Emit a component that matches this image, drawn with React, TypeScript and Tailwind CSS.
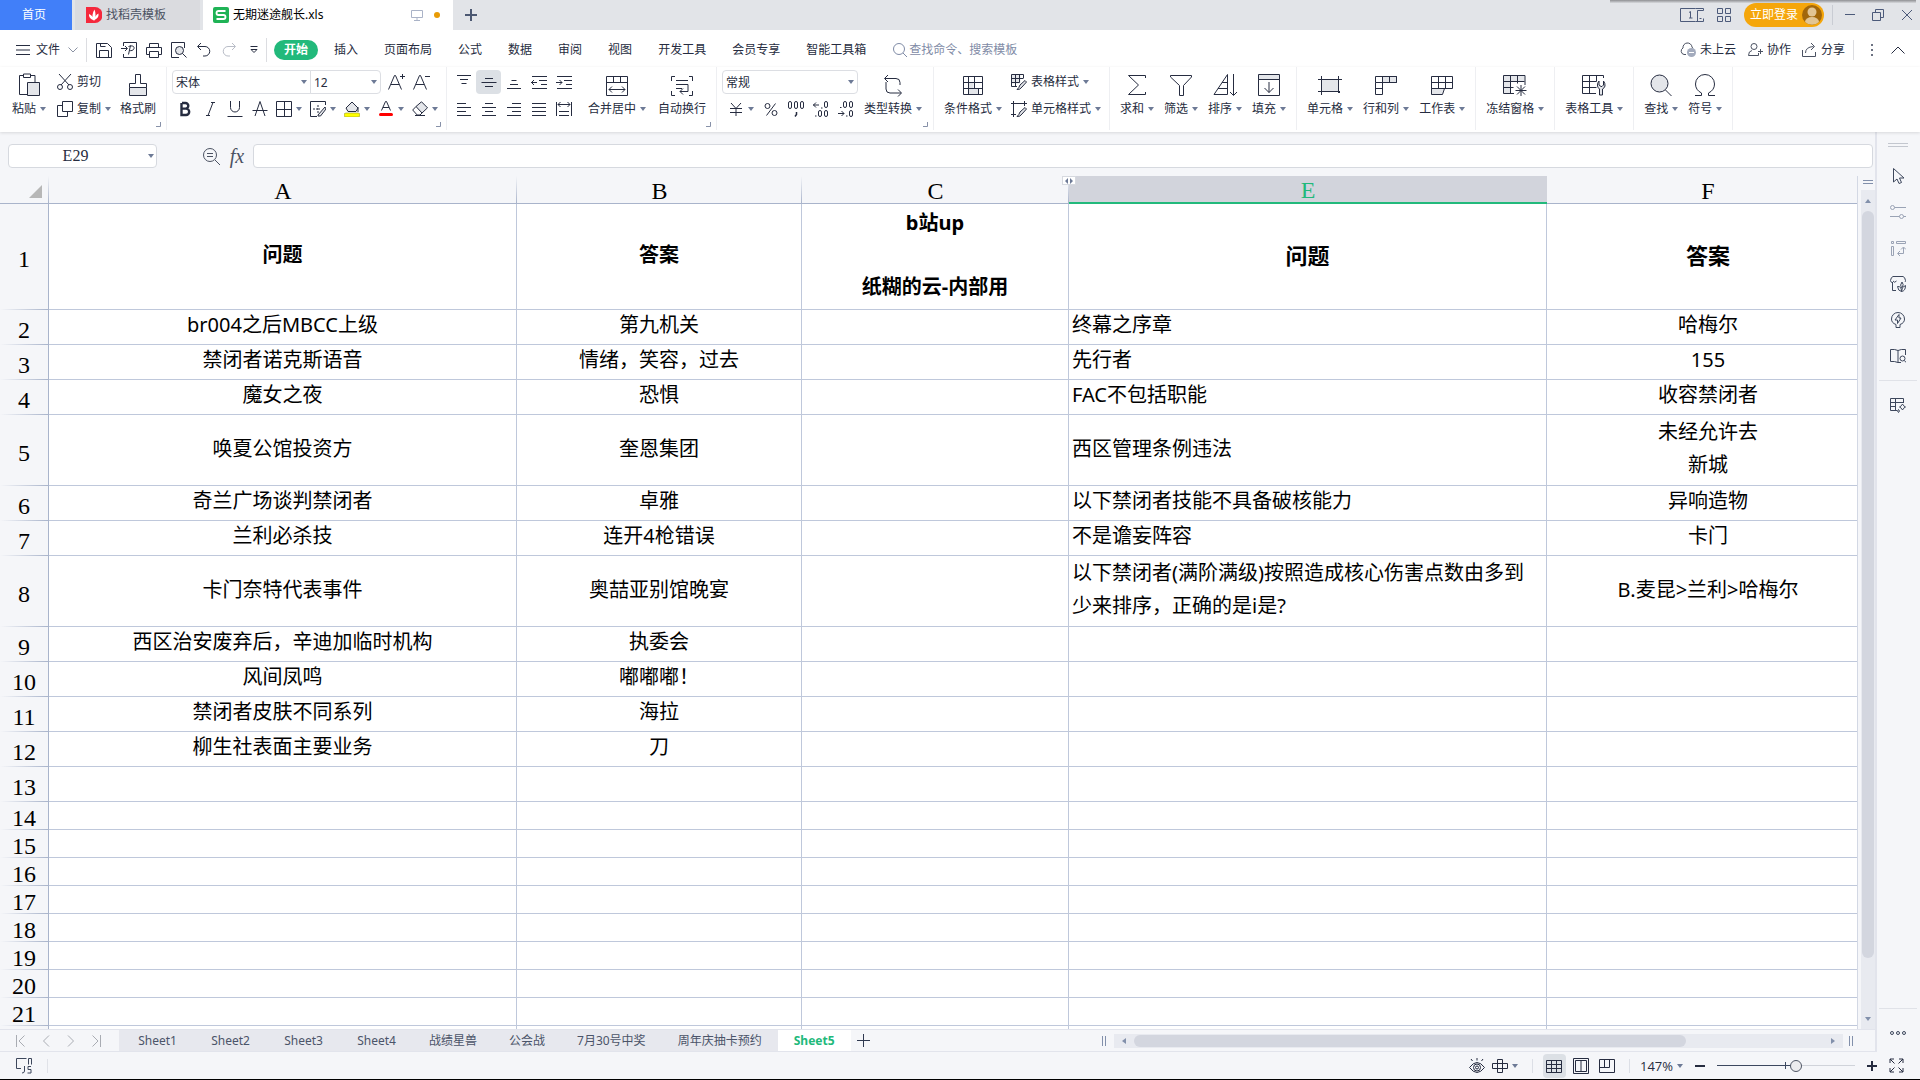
import React, { useState } from 'react';

type Cell = { text: string; left?: boolean; big?: boolean };

interface Row {
  height: string;
  bold?: boolean;
  cells: (Cell | null)[];
}

const c = (text: string): Cell => ({ text });
const l = (text: string): Cell => ({ text, left: true });

const H_TALL = 'h-[71px] leading-[33px]';
const H_ROW = 'h-[35px] leading-[30px]';
const H_EMPTY = 'h-[28px] leading-[24px]';

const ROWS: Row[] = [
  {
    height: 'h-[106px] leading-[32px]',
    bold: true,
    cells: [c('问题'), c('答案'), c('b站up\n\n纸糊的云-内部用'), { text: '问题', big: true }, { text: '答案', big: true }],
  },
  { height: H_ROW, cells: [c('br004之后MBCC上级'), c('第九机关'), null, l('终幕之序章'), c('哈梅尔')] },
  { height: H_ROW, cells: [c('禁闭者诺克斯语音'), c('情绪，笑容，过去'), null, l('先行者'), c('155')] },
  { height: H_ROW, cells: [c('魔女之夜'), c('恐惧'), null, l('FAC不包括职能'), c('收容禁闭者')] },
  { height: H_TALL, cells: [c('唤夏公馆投资方'), c('奎恩集团'), null, l('西区管理条例违法'), c('未经允许去\n新城')] },
  { height: H_ROW, cells: [c('奇兰广场谈判禁闭者'), c('卓雅'), null, l('以下禁闭者技能不具备破核能力'), c('异响造物')] },
  { height: H_ROW, cells: [c('兰利必杀技'), c('连开4枪错误'), null, l('不是谵妄阵容'), c('卡门')] },
  {
    height: H_TALL,
    cells: [
      c('卡门奈特代表事件'),
      c('奥喆亚别馆晚宴'),
      null,
      l('以下禁闭者(满阶满级)按照造成核心伤害点数由多到少来排序，正确的是i是?'),
      c('B.麦昆>兰利>哈梅尔'),
    ],
  },
  { height: H_ROW, cells: [c('西区治安废弃后，辛迪加临时机构'), c('执委会'), null, null, null] },
  { height: H_ROW, cells: [c('风间凤鸣'), c('嘟嘟嘟！'), null, null, null] },
  { height: H_ROW, cells: [c('禁闭者皮肤不同系列'), c('海拉'), null, null, null] },
  { height: H_ROW, cells: [c('柳生社表面主要业务'), c('刀'), null, null, null] },
  { height: H_ROW, cells: [null, null, null, null, null] },
  ...Array.from({ length: 8 }, () => ({ height: H_EMPTY, cells: [null, null, null, null, null] })),
];

const COLUMNS = ['A', 'B', 'C', 'E', 'F'];
const MENUS = ['插入', '页面布局', '公式', '数据', '审阅', '视图', '开发工具', '会员专享', '智能工具箱'];
const SHEETS = ['Sheet1', 'Sheet2', 'Sheet3', 'Sheet4', '战绩星兽', '公会战', '7月30号中奖', '周年庆抽卡预约', 'Sheet5'];

const Svg: React.FC<{ w?: number; h?: number; className?: string; children: React.ReactNode }> = ({
  w = 16,
  h = 16,
  className = '',
  children,
}) => (
  <svg width={w} height={h} viewBox={`0 0 ${w} ${h}`} fill="none" stroke="currentColor" className={`shrink-0 ${className}`} aria-hidden="true">
    {children}
  </svg>
);

const Caret = () => (
  <svg width="6" height="4" viewBox="0 0 6 4" className="shrink-0 text-[#6d7a96]" aria-hidden="true">
    <path d="M0 0h6L3 4z" fill="currentColor" />
  </svg>
);

const Corner = () => (
  <Svg w={5} h={5} className="absolute right-[5px] bottom-[3px] text-[#8791a8]">
    <path d="M4.500 0v4.500H0" />
  </Svg>
);

const Sep = () => <div className="h-6 w-px shrink-0 bg-[#dcdde1]" />;

/* ---------- icons ---------- */

const GREY = '#e4e6ea';

const I = {
  save: <Svg><path d="M.5 15.500V1.500h11l4 4v10zM3.500 15.500v-7h9v7M4.500 1.500v3h5" /></Svg>,
  exportPdf: <Svg><path d="M2.500 4V.5h13v15h-13V12M0 6.500h6M4 4l2.500 2.500L4 9M7.500 12.500l2-9M7.500 4.500c4-1.500 6 0 5.500 2s-3 2.500-4.500 2" /></Svg>,
  print: <Svg><path d="M3.500 5V1.500h9V5M3.500 12.500h-3v-7h15v7h-3M3.500 9.500h9v6h-9z" /></Svg>,
  preview: (
    <Svg>
      <path d="M13.500 6V.5H.5v15H8" />
      <circle cx="8.500" cy="8.500" r="4" fill={GREY} />
      <path d="M11.500 11.500l4 4" />
    </Svg>
  ),
  undo: <Svg><path d="M5 1L1.500 4.500 5 8M2 4.500h7a4.500 4.500 0 010 9.500H7" /></Svg>,
  redo: <Svg className="text-[#b9bdc7]"><path d="M11 1l3.500 3.500L11 8M14 4.500H7A4.500 4.500 0 007 14h2" /></Svg>,
  more: <Svg w={8} h={8}><path d="M.5.5h7M1 3.500h6l-3 3z" /></Svg>,
  paste: (
    <Svg w={22} h={24}>
      <path d="M6 2.500H1.500v19H9M12 2.500h5V9" />
      <path d="M5.500 1h7v3.500h-7z" />
      <path d="M9.500 9.500h12v13h-12z" fill={GREY} />
    </Svg>
  ),
  cut: (
    <Svg>
      <path d="M2 0l10 11M14 0L4 11" />
      <circle cx="3" cy="13" r="2.500" />
      <circle cx="13" cy="13" r="2.500" />
    </Svg>
  ),
  copy: <Svg><path d="M5.500.5h10v10h-10zM5.500 4.500h-5v11h10v-5" /></Svg>,
  painter: (
    <Svg w={20} h={24}>
      <path d="M1.500 14.500h17v8h-17z" fill={GREY} />
      <path d="M1.500 14.500v-4h6v-9h5v9h6v4" />
    </Svg>
  ),
  fontUp: <Svg w={17}><path d="M.5 15.500L6.500 1.500h1l6 14M3 10.500h8M14.500 0v5M12 2.500h5" /></Svg>,
  fontDown: <Svg w={17}><path d="M.5 15.500L6.500 1.500h1l6 14M3 10.500h8M12 2.500h5" /></Svg>,
  bold: <Svg><path d="M4.500 2v12H9a3.200 3.200 0 000-6.400H5M5 2h3.500a2.800 2.800 0 010 5.600" strokeWidth="2.400" /></Svg>,
  italic: <Svg><path d="M9 1.500h4M4 14.500h4M11 1.500l-5 13" /></Svg>,
  underline: <Svg><path d="M3.500 0v6.500a4.500 4.500 0 009 0V0M.5 15.500h15" /></Svg>,
  strike: <Svg><path d="M3 15L8 .5 13 15M.5 9.500h15" /></Svg>,
  borders: <Svg><path d="M.5.5h15v15H.5zM8.500.5v15M.5 8.500h15" /></Svg>,
  borderPen: (
    <Svg>
      <path d="M15.500 4V.5H.5v15H7" />
      <path d="M8 4v8M3 8h7" strokeDasharray="2 1" />
      <path d="M8 14l7-8 1 2-5.500 7H8z" fill={GREY} />
    </Svg>
  ),
  fill: (
    <Svg>
      <path d="M2 7l6-6 6 6-2 3.500H4z" fill={GREY} />
      <path d="M2 7l6-6 6 6M14 6v5" />
      <rect x="0" y="12" width="16" height="4" rx="2" fill="#ffff00" stroke="#8d9136" strokeWidth=".6" />
    </Svg>
  ),
  fontColor: (
    <Svg>
      <path d="M3.500 9.500L7.500.5h1l4 9M5 6.500h6" />
      <rect x="1" y="12" width="14" height="3" rx="1.500" fill="#ff0000" stroke="none" />
    </Svg>
  ),
  eraser: (
    <Svg>
      <path d="M4 5.500L9.500.8l6 6L10 12z" fill={GREY} />
      <path d="M4 5.500L.7 9l4.500 5H8l2-2M3 14.500h10" />
    </Svg>
  ),
  alignTop: <Svg><path d="M1 1.500h14M4 5.500h8M5.500 9.500h5" /></Svg>,
  alignMiddle: <Svg><path d="M4 4.500h8M.5 8.500h15M4 12.500h8" /></Svg>,
  alignBottom: <Svg><path d="M5.500 6.500h5M4 10.500h8M1 14.500h14" /></Svg>,
  outdent: <Svg><path d="M1 2.500h15M8 6.500h8M10 10.500h6M1 14.500h15M0 8.500h6M3 6L.5 8.500 3 11" /></Svg>,
  indent: <Svg><path d="M1 2.500h15M8 6.500h8M10 10.500h6M1 14.500h15M0 8.500h6M3.500 6L6 8.500 3.500 11" /></Svg>,
  left: <Svg><path d="M1 2.500h9M1 6.500h14M1 10.500h9M1 14.500h14" /></Svg>,
  center: <Svg><path d="M4 2.500h8M1 6.500h14M4 10.500h8M1 14.500h14" /></Svg>,
  right: <Svg><path d="M6 2.500h9M1 6.500h14M6 10.500h9M1 14.500h14" /></Svg>,
  justify: <Svg><path d="M1 2.500h14M1 6.500h14M1 10.500h14M1 14.500h14" /></Svg>,
  distribute: <Svg><path d="M.5 1v14M15.500 1v14M2 3.500h12M4.500 1L2 3.500 4.500 6M11.500 1L14 3.500 11.500 6M3 10.500h10M3 14.500h10" /></Svg>,
  merge: <Svg w={22} h={24}><path d="M.5 3.500h21v19H.5zM.5 9.500h21M7.500 3.500v6M14.500 3.500v6M3 16.500h16M6 13.500l-3 3 3 3M16 13.500l3 3-3 3" /></Svg>,
  wrap: <Svg w={22} h={24}><path d="M4 3.500H.5V8M18 3.500h3.500V8M4 22.500H.5V18M18 22.500h3.500V18M5 7.500h12M5 11.500h12v7H9M5 15.500h6M12 15.500l-3 3 3 3" /></Svg>,
  yen: <Svg><path d="M3 2l5 5.500L13 2M8 7.500V15M2 7.500h12M2 11.500h12" /></Svg>,
  percent: (
    <Svg>
      <circle cx="4.500" cy="5" r="2.500" />
      <circle cx="11.500" cy="12" r="2.500" />
      <path d="M12.500 2.500l-9 12" />
    </Svg>
  ),
  thousands: (
    <Svg>
      <rect x=".5" y=".5" width="3" height="7" rx="1.500" />
      <rect x="6.500" y=".5" width="3" height="7" rx="1.500" />
      <rect x="12.500" y=".5" width="3" height="7" rx="1.500" />
      <path d="M8.500 11v2.500L7 15.500" strokeWidth="1.500" />
    </Svg>
  ),
  moreDecimal: (
    <Svg>
      <path d="M0 4h6M3 1.500L.5 4 3 6.500M8 7h1.500M2 15h1.500" />
      <rect x="11.500" y=".5" width="3" height="6" rx="1.500" />
      <rect x="5.500" y="9.500" width="3" height="6" rx="1.500" />
      <rect x="11.500" y="9.500" width="3" height="6" rx="1.500" />
    </Svg>
  ),
  lessDecimal: (
    <Svg>
      <path d="M0 12.500h6M3.500 10L6 12.500 3.500 15M8 15h1.500M2 6.500h1.500" />
      <rect x="5.500" y=".5" width="3" height="6" rx="1.500" />
      <rect x="11.500" y=".5" width="3" height="6" rx="1.500" />
      <rect x="11.500" y="9.500" width="3" height="6" rx="1.500" />
    </Svg>
  ),
  convert: <Svg w={20} h={24}><path d="M5 2L1.500 5.500 5 9M2 5.500h11q4 0 4 4V12M3 9v7q0 4 4 4h11M15 16.500l3.500 3.500-3.500 3.500" /></Svg>,
  condFormat: (
    <Svg w={22} h={24}>
      <path d="M6.500 9.500h5v6h-5zM6.500 15.500h10v6h-10z" fill={GREY} stroke="none" />
      <path d="M1.500 3.500h19v18h-19zM1.500 9.500h19M1.500 15.500h19M6.500 3.500v18M12.500 3.500v6M16.500 15.500v6M12.500 9.500v6" />
    </Svg>
  ),
  tableStyle: (
    <Svg>
      <path d="M.5.5h9v9h-9z" fill={GREY} stroke="none" />
      <path d="M12.500 4V.5H.5v12H6M.5 4.500h12M.5 8.500h8M4.500.5v12M8.500.5v8" />
      <path d="M9 11l5-4.500 1.500 1.500L11 13q-2 3-5 2.500 2-1.500 3-4.500z" fill={GREY} />
    </Svg>
  ),
  cellStyle: (
    <Svg>
      <path d="M0 2.500h16M2.500 0v16M13.500 0v5M0 13.500h5" />
      <path d="M9 11l5-4.500 1.500 1.500L11 13q-2 3-5 2.500 2-1.500 3-4.500z" fill={GREY} />
    </Svg>
  ),
  sum: <Svg w={20} h={24}><path d="M18.500 5V2.500H1.500l10 9.500-10 9.500h17V19" /></Svg>,
  filter: <Svg w={22} h={24}><path d="M.5 2.500h21v1.500l-8 8.500v10h-4v-10L.5 4z" /></Svg>,
  sort: <Svg w={24} h={24}><path d="M14.500 21.500v-20L1 21.500h13.500M5 15.500h9.500M9 9.500h5.500M20.500 1v21M17 19l3.500 3.500L24 19" /></Svg>,
  fillDown: (
    <Svg w={22} h={24}>
      <path d="M.5 1.500h21v5H.5z" fill={GREY} />
      <path d="M.5 6.500h21v16H.5zM11 9v10.500M6.500 15l4.500 4.500 4.500-4.500" />
    </Svg>
  ),
  cells: (
    <Svg w={24} h={24}>
      <path d="M3.500 6.500h17v12h-17z" fill={GREY} />
      <path d="M0 6.500h24M0 18.500h19M3.500 3v19M20.500 3v13" />
      <path d="M20 18h2v2h-2z" fill="currentColor" stroke="none" />
    </Svg>
  ),
  rowsCols: (
    <Svg w={22} h={24}>
      <path d="M7.500 3.500h14v6h-14z" fill={GREY} />
      <path d="M.5 3.500h21v6H.5zM.5 9.500v12h7v-18M14.500 3.500v6M.5 15.500h7" />
    </Svg>
  ),
  sheet: (
    <Svg w={22} h={24}>
      <path d="M.5 15.500h13l-2 6H.5z" fill={GREY} />
      <path d="M.5 3.500h21v12H.5zM.5 9.500h21M7.500 3.500v12M14.500 3.500v12" />
    </Svg>
  ),
  freeze: (
    <Svg w={24} h={24}>
      <path d="M.5 2.500h7v18h-7zM7.500 2.500h14v6h-14z" fill={GREY} stroke="none" />
      <path d="M22 12V2.500H.5v18H11M.5 8.500h21M.5 14.500h10M7.500 2.500v18M14.500 2.500v8M18 12v11M12.500 17.500h11M14 13.500l8 8M22 13.500l-8 8" />
    </Svg>
  ),
  tableTool: (
    <Svg w={24} h={24}>
      <path d="M21.500 5V2.500H.5v18H14M.5 8.500h14M.5 14.500h14M7.500 2.500v18M14.500 2.500v6" />
      <path d="M17 8q-2 2-1.500 5 .5 2 2 3v6h3v-6q2-1 2.500-3 .3-3-1.500-5v4l-1.500 1.500h-1L17 12z" fill={GREY} />
    </Svg>
  ),
  find: (
    <Svg w={22} h={24}>
      <circle cx="9.500" cy="10.500" r="8.500" fill={GREY} />
      <path d="M15.500 17l6 6" />
    </Svg>
  ),
  symbol: <Svg w={22} h={24}><path d="M1 22.500h6.500v-2.500Q1.500 17 1.500 11a9.500 9.500 0 0119 0q0 6-6 9v2.500H21" /></Svg>,
};

const Big: React.FC<{ icon: React.ReactNode; label: string; caret?: boolean }> = ({ icon, label, caret = true }) => (
  <button className="flex flex-col items-center pt-1.5">
    {icon}
    <span className="flex h-6 items-center gap-1 whitespace-nowrap">
      {label}
      {caret && <Caret />}
    </span>
  </button>
);

const Small: React.FC<{ icon: React.ReactNode; label: string; caret?: boolean }> = ({ icon, label, caret = true }) => (
  <button className="flex h-6 items-center gap-1 whitespace-nowrap">
    {icon}
    {label}
    {caret && <Caret />}
  </button>
);

const Tool: React.FC<{ icon: React.ReactNode; name: string; active?: boolean }> = ({ icon, name, active }) => (
  <button aria-label={name} className={`flex h-6 w-[25px] items-center justify-center rounded-sm ${active ? 'bg-[#dce0e5]' : ''}`}>
    {icon}
  </button>
);

const DropTool: React.FC<{ icon: React.ReactNode; name: string }> = ({ icon, name }) => (
  <button aria-label={name} className="flex h-6 w-[34px] items-center gap-1 pl-1">
    {icon}
    <Caret />
  </button>
);

const Pick: React.FC<{ name: string; value: string; className: string }> = ({ name, value, className }) => (
  <div className={`relative flex h-6 items-center border border-[#dcdee3] ${className}`}>
    <select aria-label={name} className="h-full w-full appearance-none bg-transparent pt-0.5 pl-[3px] outline-none" defaultValue={value}>
      <option>{value}</option>
    </select>
    <span className="pointer-events-none absolute right-[3px]">
      <Caret />
    </span>
  </div>
);

const Group: React.FC<{ className: string; corner?: boolean; children: React.ReactNode }> = ({ className, corner, children }) => (
  <div className={`relative flex h-[63px] shrink-0 border-r border-[#eeeff2] ${className}`}>
    {children}
    {corner && <Corner />}
  </div>
);

/* ---------- window title and tabs ---------- */

const TitleBar = () => (
  <div className="relative flex h-[30px] shrink-0 bg-[#e2e4e8]">
    <button className="w-[72px] bg-[#417ff9] pr-1 text-white">首页</button>
    <button className="ml-[3px] flex w-[125px] items-center gap-1 bg-[#dadbdf] pl-[11px] text-[#4b5262]">
      <Svg>
        <path d="M0 0h9a7.500 8 0 010 16H0z" fill="#f5283c" stroke="none" />
        <path d="M7.500 13.500Q5 8 8.500 2.500q2 5 0 11zM7 13Q2.500 11 3 7q4 1.500 4.500 6zM8.500 13q.5-5 4-6.500.5 4.500-4 6.500z" fill="#fff" stroke="none" />
      </Svg>
      找稻壳模板
    </button>
    <button className="ml-[3px] flex w-[250px] items-center bg-white pl-2.5 text-black">
      <Svg className="mr-1">
        <rect width="16" height="16" rx="2" fill="#1fb356" stroke="none" />
        <path d="M12.500 4H5.500q-2 0-2 2t2 2h5q2 0 2 2t-2 2h-7" stroke="#fff" strokeWidth="1.800" />
      </Svg>
      无期迷途舰长.xls
      <Svg w={12} h={12} className="mr-[11px] ml-auto text-[#aab3c7]">
        <path d="M.5 1.500h11v7H.5zM6 8.500v3M3 11.500h6" />
      </Svg>
      <span className="mr-[13px] h-1.5 w-1.5 rounded-full bg-[#e89b06]" />
    </button>
    <button aria-label="新建标签" className="w-9 pl-3 text-[#4c5872]">
      <Svg w={12} h={12}><path d="M6 0v12M0 6h12" strokeWidth="2" /></Svg>
    </button>
    <div className="ml-auto flex items-center text-[#4c5a7a]">
      <Svg w={24} h={14}>
        <path d="M15.500.5H.5v13h15M15.500.5h8M23.500 2.500h-6v11M15.500 13.500h8M23.500.5v2M23.500 10.500v3M19.500 10.500h2M9 4.500l1.500-1V10M9 10h3.500" />
      </Svg>
      <Svg w={14} h={14} className="ml-[13px]"><path d="M.5.5h5v5h-5zM8.500.5h5v5h-5zM.5 8.500h5v5h-5zM8.500 8.500h5v5h-5z" /></Svg>
      <button className="ml-[13px] flex h-6 w-20 items-center rounded-full bg-[#f5a60b] pl-1.5 text-white">
        立即登录
        <Svg w={20} h={20} className="ml-1">
          <circle cx="10" cy="10" r="10" fill="#a2670a" stroke="none" />
          <circle cx="10" cy="7" r="4.500" fill="#e2c594" stroke="none" />
          <path d="M3 17a7 5 0 0114 0 10 10 0 01-14 0z" fill="#e2c594" stroke="none" />
        </Svg>
      </button>
      <div className="mx-2 h-5 w-px bg-[#c9ccd3]" />
      <button aria-label="最小化" className="ml-1"><Svg w={10} h={12}><path d="M0 5.500h10" /></Svg></button>
      <button aria-label="还原" className="ml-[17px]"><Svg w={12} h={12}><path d="M.5 3.500h8v8h-8zM3.500 3V.5h8v8H9" /></Svg></button>
      <button aria-label="关闭" className="mr-2 ml-[18px]"><Svg w={10} h={12}><path d="M0 1l10 10M10 1L0 11" /></Svg></button>
    </div>
    <div className="absolute top-0 right-1 h-[3px] w-[306px] bg-linear-to-b from-[#8f9093] to-[#d8dade]" />
  </div>
);

const MenuBar = () => (
  <div className="flex h-[37px] shrink-0 items-center pt-0.5">
    <button className="flex items-center pl-4">
      <Svg w={14} h={10} className="mr-1.5"><path d="M0 .5h14M0 5h14M0 9.500h14" /></Svg>
      文件
      <Svg w={10} h={6} className="ml-2 text-[#8b92a3]"><path d="M.5.5L5 5 9.500.5" /></Svg>
    </button>
    <div className="mr-[9px] ml-2"><Sep /></div>
    <div className="flex items-center gap-[9px]">
      <button aria-label="保存">{I.save}</button>
      <button aria-label="输出为PDF">{I.exportPdf}</button>
      <button aria-label="打印">{I.print}</button>
      <button aria-label="打印预览">{I.preview}</button>
      <button aria-label="撤销">{I.undo}</button>
      <button aria-label="恢复">{I.redo}</button>
      <button aria-label="自定义快速访问" className="ml-1">{I.more}</button>
    </div>
    <div className="mr-[7px] ml-2"><Sep /></div>
    <button className="mr-[3px] h-5 rounded-full bg-[#22b97b] px-2.5 font-bold text-white">开始</button>
    {MENUS.map(m => (
      <button key={m} className="px-[13px] whitespace-nowrap">{m}</button>
    ))}
    <label className="ml-[14px] flex items-center gap-0.5 text-[#7f8ba6]">
      <Svg w={14} h={14}>
        <circle cx="6" cy="6" r="5.500" />
        <path d="M10 10l4 4" />
      </Svg>
      <input aria-label="查找命令" placeholder="查找命令、搜索模板" className="w-[120px] outline-none placeholder:text-[#7f8ba6]" />
    </label>
    <div className="ml-auto flex items-center">
      <button className="flex items-center gap-1">
        <Svg>
          <path d="M6 12.500H4A3.500 3.500 0 013 6a4.500 4.500 0 019-1l1 1.500" stroke="#4b5262" />
          <circle cx="11.500" cy="10.500" r="4.500" fill="#a3abbd" stroke="none" />
          <path d="M9 10.500h5" stroke="#fff" />
        </Svg>
        未上云
      </button>
      <button className="ml-3 flex items-center gap-1">
        <Svg w={15} className="text-[#4b5262]">
          <circle cx="6" cy="4.500" r="3" />
          <path d="M4 8.500Q.5 9 .5 13.500h10V11M10 9.500h5M12.500 7v5" />
        </Svg>
        协作
      </button>
      <button className="ml-2.5 flex items-center gap-1">
        <Svg w={16} className="text-[#4b5262]"><path d="M1.500 8v6.500h13V10M4.500 11q0-6 8-6.500M10 1l3.500 3.500L10 8" /></Svg>
        分享
      </button>
      <div className="mr-[17px] ml-2 h-5 w-px bg-[#dcdde1]" />
      <button aria-label="更多" className="text-[#6c7282]">
        <Svg w={2} h={12}><path d="M1 0v12" strokeWidth="2" strokeDasharray="2 3" /></Svg>
      </button>
      <button aria-label="收起功能区" className="mr-[15px] ml-[18px]"><Svg w={14} h={8}><path d="M.5 7.500L7 1l6.500 6.500" /></Svg></button>
    </div>
  </div>
);

const Ribbon = () => (
  <div className="relative z-10 flex h-[65px] shrink-0 bg-white shadow-[0_1px_3px_rgba(0,0,0,0.12)]">
    <Group className="w-[167px] pl-3" corner>
      <Big icon={I.paste} label="粘贴" />
      <div className="ml-[11px] w-[53px] pt-[3px]">
        <Small icon={I.cut} label="剪切" caret={false} />
        <div className="h-[3px]" />
        <Small icon={I.copy} label="复制" />
      </div>
      <div className="ml-[10px] flex"><Big icon={I.painter} label="格式刷" caret={false} /></div>
    </Group>
    <Group className="w-[280px] flex-col gap-[3px] pt-[3px] pl-[5px]" corner>
      <div className="flex">
        <Pick name="字体" value="宋体" className="w-[139px] rounded-l-sm" />
        <Pick name="字号" value="12" className="-ml-px w-[71px] rounded-r-sm" />
        <div className="w-[3px]" />
        <Tool icon={I.fontUp} name="增大字号" />
        <Tool icon={I.fontDown} name="减小字号" />
      </div>
      <div className="flex">
        <Tool icon={I.bold} name="加粗" />
        <Tool icon={I.italic} name="倾斜" />
        <Tool icon={I.underline} name="下划线" />
        <Tool icon={I.strike} name="删除线" />
        <DropTool icon={I.borders} name="边框" />
        <DropTool icon={I.borderPen} name="绘图边框" />
        <DropTool icon={I.fill} name="填充颜色" />
        <DropTool icon={I.fontColor} name="字体颜色" />
        <DropTool icon={I.eraser} name="清除" />
      </div>
    </Group>
    <Group className="w-[270px] pl-1" corner>
      <div className="flex flex-col gap-[3px] pt-[3px]">
        <div className="flex">
          <Tool icon={I.alignTop} name="顶端对齐" />
          <Tool icon={I.alignMiddle} name="垂直居中" active />
          <Tool icon={I.alignBottom} name="底端对齐" />
          <Tool icon={I.outdent} name="减少缩进" />
          <Tool icon={I.indent} name="增加缩进" />
        </div>
        <div className="flex">
          <Tool icon={I.left} name="左对齐" />
          <Tool icon={I.center} name="水平居中" />
          <Tool icon={I.right} name="右对齐" />
          <Tool icon={I.justify} name="两端对齐" />
          <Tool icon={I.distribute} name="分散对齐" />
        </div>
      </div>
      <div className="ml-3 flex gap-3">
        <Big icon={I.merge} label="合并居中" />
        <Big icon={I.wrap} label="自动换行" caret={false} />
      </div>
    </Group>
    <Group className="w-[217px] gap-1.5 pl-[5px]" corner>
      <div className="flex flex-col gap-[3px] pt-[3px]">
        <Pick name="数字格式" value="常规" className="w-[136px] rounded-sm" />
        <div className="flex pl-0.5">
          <DropTool icon={I.yen} name="货币" />
          <Tool icon={I.percent} name="百分比" />
          <Tool icon={I.thousands} name="千位分隔" />
          <Tool icon={I.moreDecimal} name="增加小数位" />
          <Tool icon={I.lessDecimal} name="减少小数位" />
        </div>
      </div>
      <Big icon={I.convert} label="类型转换" />
    </Group>
    <Group className="gap-[9px] pr-2 pl-2.5">
      <Big icon={I.condFormat} label="条件格式" />
      <div className="flex flex-col gap-[3px] pt-[3px]">
        <Small icon={I.tableStyle} label="表格样式" />
        <Small icon={I.cellStyle} label="单元格样式" />
      </div>
    </Group>
    <Group className="gap-2.5 px-2.5">
      <Big icon={I.sum} label="求和" />
      <Big icon={I.filter} label="筛选" />
      <Big icon={I.sort} label="排序" />
      <Big icon={I.fillDown} label="填充" />
    </Group>
    <Group className="gap-2.5 px-2.5">
      <Big icon={I.cells} label="单元格" />
      <Big icon={I.rowsCols} label="行和列" />
      <Big icon={I.sheet} label="工作表" />
    </Group>
    <Group className="px-2.5"><Big icon={I.freeze} label="冻结窗格" /></Group>
    <Group className="px-2.5"><Big icon={I.tableTool} label="表格工具" /></Group>
    <Group className="gap-2.5 px-2.5">
      <Big icon={I.find} label="查找" />
      <Big icon={I.symbol} label="符号" />
    </Group>
  </div>
);

const FormulaBar = () => (
  <div className="flex h-11 shrink-0 items-center pt-1 pr-0.5 pl-2 text-[#4b5262]">
    <div className="relative flex h-6 w-[149px] items-center rounded-sm border border-[#d6d9df] bg-white">
      <input
        aria-label="名称框"
        defaultValue="E29"
        className="w-full pr-3.5 text-center font-['Liberation_Serif','Noto_Sans_CJK_SC',serif] text-[16px] text-[#262c40] outline-none"
      />
      <span className="absolute right-0.5"><Caret /></span>
    </div>
    <Svg w={17} h={17} className="ml-[46px]">
      <circle cx="7" cy="7" r="6.500" />
      <path d="M4 5.500h6M4 8.500h6M12 12l5 5" />
    </Svg>
    <button aria-label="插入函数" className="ml-2 w-[18px] font-['Liberation_Serif',serif] text-[20px] italic">fx</button>
    <input aria-label="编辑栏" className="ml-[7px] h-6 flex-1 rounded-sm border border-[#d6d9df] bg-white px-2 outline-none" />
  </div>
);

/* ---------- sheet ---------- */

const Grid = () => (
  <div className="relative min-w-0 flex-1 overflow-hidden border-r border-[#d3d8e4] bg-white">
    {/* the last column runs a little past the right edge */}
    <table className="w-[calc(100%+12px)] table-fixed border-separate border-spacing-0 text-[20px] text-black">
      <colgroup>
        <col className="w-[49px]" />
        <col className="w-[468px]" />
        <col className="w-[285px]" />
        <col className="w-[267px]" />
        <col className="w-[478px]" />
        <col />
      </colgroup>
      <thead>
        <tr className="h-[28px] bg-[#f5f6f9] font-['Liberation_Serif','Noto_Sans_CJK_SC',serif] text-[24px] leading-[24px]">
          <th aria-label="全选" className="border-b border-[#a9b4cb] bg-[linear-gradient(to_top,#a9b4cb,transparent)] bg-[length:1px_100%] bg-right bg-no-repeat p-0">
            <Svg w={14} h={14} className="mt-1 ml-[29px] text-[#b7b7b7]"><path d="M13 0v13H0z" fill="currentColor" stroke="none" /></Svg>
          </th>
          {COLUMNS.map(col =>
            col === 'E' ? (
              <th key={col} scope="col" className="border-b-2 border-[#22b97b] bg-[#d2d4dc] p-0 pt-0.5 font-normal text-[#22b97b]">{col}</th>
            ) : (
              <th
                key={col}
                scope="col"
                className={`border-b border-[#a9b4cb] p-0 pt-0.5 font-normal ${col === 'F' ? '' : 'bg-[linear-gradient(to_top,#a9b4cb,transparent)] bg-[length:1px_100%] bg-right bg-no-repeat'}`}
              >
                {col}
              </th>
            ),
          )}
        </tr>
      </thead>
      <tbody>
        {ROWS.map((row, i) => (
          <tr key={i} className={row.height}>
            <th
              scope="row"
              className="border-r border-[#a9b4cb] bg-[#f5f6f9] bg-[linear-gradient(to_right,transparent,#a9b4cb)] bg-[length:100%_1px] bg-bottom bg-no-repeat p-0 pt-1 font-['Liberation_Serif',serif] text-[24px] leading-[24px] font-normal"
            >
              {i + 1}
            </th>
            {row.cells.map((cell, j) => (
              <td
                key={j}
                className={`border-b border-[#bfc8db] p-0 whitespace-pre-line ${cell ? 'pb-1' : ''} ${j < 4 ? 'border-r' : ''} ${cell?.left ? 'pr-4 pl-[3px] text-left' : 'text-center'} ${row.bold ? 'font-bold' : ''} ${cell?.big ? 'text-[22px]' : ''}`}
              >
                {cell?.text}
              </td>
            ))}
          </tr>
        ))}
        <tr className={H_EMPTY}>
          <th className="border-r border-[#a9b4cb] bg-[#f5f6f9] p-0" />
          {COLUMNS.map(col => (
            <td key={col} className="border-r border-[#bfc8db] p-0 last:border-r-0" />
          ))}
        </tr>
      </tbody>
    </table>
    {/* hidden column D marker */}
    <div className="absolute top-0 left-[1062px] flex h-[9px] w-[14px] items-center justify-center border border-[#d6d9df] bg-white text-[#6d7a96]">
      <Svg w={10} h={6}><path d="M4 0v6L1 3zM6 0v6l3-3z" fill="currentColor" stroke="none" /></Svg>
    </div>
  </div>
);

const VScroll = () => (
  <div className="flex w-[17px] shrink-0 flex-col items-center pl-0.5">
    <Svg w={10} h={14} className="text-[#8290ab]"><path d="M0 4.500h10M0 7.500h10" /></Svg>
    <div className="flex w-[14px] flex-1 flex-col items-center bg-[#e8eaf0] text-[#8290ab]">
      <button aria-label="向上滚动" className="flex h-[21px] items-center"><Svg w={6} h={4}><path d="M0 4h6L3 0z" fill="currentColor" stroke="none" /></Svg></button>
      <div className="w-3 flex-1 rounded-full bg-[#d3d6df]" />
      <button aria-label="向下滚动" className="flex h-[71px] items-end pb-2"><Svg w={6} h={4}><path d="M0 0h6L3 4z" fill="currentColor" stroke="none" /></Svg></button>
    </div>
  </div>
);

const SheetBar: React.FC = () => {
  const [active, setActive] = useState('Sheet5');
  return (
    <div className="flex h-[23px] shrink-0 border-y border-[#e2e4ec] text-[#4b5469]">
      <div className="flex w-[119px] items-center gap-[17px] pl-4 text-[#a9acb3]">
        <button aria-label="第一个工作表"><Svg w={9} h={12}><path d="M.5 0v12M8.500.5L3 6l5.500 5.500" /></Svg></button>
        <button aria-label="上一个工作表"><Svg w={8} h={12}><path d="M7 .5L1.500 6 7 11.500" /></Svg></button>
        <button aria-label="下一个工作表"><Svg w={8} h={12}><path d="M1 .5L6.500 6 1 11.500" /></Svg></button>
        <button aria-label="最后一个工作表"><Svg w={9} h={12}><path d="M8.500 0v12M.5.5L6 6 .5 11.500" /></Svg></button>
      </div>
      <div className="flex bg-[#e7e8ee] pl-0.5">
        {SHEETS.map(name => (
          <button
            key={name}
            onClick={() => setActive(name)}
            className={`whitespace-nowrap ${name.startsWith('Sheet') ? 'w-[73px]' : 'px-4'} ${name === active ? 'bg-white font-bold text-[#22b97b]' : ''}`}
          >
            {name}
          </button>
        ))}
      </div>
      <button aria-label="新建工作表" className="ml-[6px] text-[#2f3950]"><Svg w={13} h={13}><path d="M6.500 0v13M0 6.500h13" /></Svg></button>
      <div className="mr-[22px] ml-auto flex w-[751px] items-center text-[#8290ab]">
        <Svg w={4} h={10} className="mr-2"><path d="M.5 0v10M3.500 0v10" /></Svg>
        <div className="flex h-[14px] flex-1 items-center bg-[#e8eaf0]">
          <button aria-label="向左滚动" className="flex w-5 justify-center"><Svg w={4} h={6}><path d="M4 0v6L0 3z" fill="currentColor" stroke="none" /></Svg></button>
          <div className="h-3 flex-1 rounded-full bg-[#d3d6df]" />
          <button aria-label="向右滚动" className="flex w-[157px] justify-end pr-2"><Svg w={4} h={6}><path d="M0 0v6l4-3z" fill="currentColor" stroke="none" /></Svg></button>
        </div>
        <Svg w={4} h={10} className="ml-1.5"><path d="M.5 0v10M3.500 0v10" /></Svg>
      </div>
    </div>
  );
};

const SidePanel = () => (
  <div className="flex w-[45px] shrink-0 flex-col items-center border-l-2 border-[#e2e4ec] pr-0.5 text-[#3d475c]">
    <Svg w={20} h={4} className="mt-[11px] mb-[21px] text-[#c3c7cf]"><path d="M0 .5h20M0 3.500h20" /></Svg>
    <div className="flex flex-col items-center gap-5">
      <button aria-label="选择"><Svg><path d="M3.500.5v13.500l3.500-3 2 4.500 2.500-1-2-4.500h4.500z" /></Svg></button>
      <button aria-label="属性" className="text-[#9aa3b5]">
        <Svg>
          <circle cx="2.500" cy="3.500" r="2" />
          <circle cx="11.500" cy="12.500" r="2" />
          <path d="M4.500 3.500H16M0 12.500h9.500M13.500 12.500H16" />
        </Svg>
      </button>
      <button aria-label="选择窗格" className="text-[#9aa3b5]"><Svg><path d="M1.500 1.500h2v2h-2zM6.500 1.500h9v2h-9zM1.500 6.500h2v9h-2zM8 13.500h5.500v-6M10 11l-2.500 2.500L10 16M11 9.500L13.500 7 16 9.500" /></Svg></button>
      <button aria-label="稻壳资源">
        <Svg>
          <path d="M2 6.500Q.5 6 .5 4.500 1 1 3 .5h10q2 .5 2.500 4 0 1-.5 1.500M2.500 6v8.500H6M3 5q1.500 2.500 3.500 0" />
          <path d="M7.500 10.500q4-.5 4 5-3.500-.5-4-5zM15.500 9.500q-4 1-4 6 4-.5 4-6zM11.500 12q-2-3 .5-6 2 2.500.5 5" />
        </Svg>
      </button>
      <button aria-label="推荐功能"><Svg><path d="M6 12.500Q1.500 11 1.500 7a6.500 6.500 0 0113 0q0 4-4.500 5.500v3H6zM9 2.500L5 8h2.500v3.500L11 6H9z" /></Svg></button>
      <button aria-label="帮助中心">
        <Svg>
          <path d="M8 2.500Q5 1 .5 1.500v12q4-.5 7.500 1v-12Q11 1 15.500 1.500V7M8 14.500h3" />
          <circle cx="12.500" cy="10.500" r="2.500" />
          <path d="M14.500 12.500l1.500 2" />
        </Svg>
      </button>
    </div>
    <div className="my-4 h-px w-[38px] bg-[#e0e2e8]" />
    <button aria-label="智能工具"><Svg><path d="M13.500 6V1.500H.5v12H7M.5 5.500h13M5.500 1.500v12M.5 9.500h5M12.500 7l1.200 1.800 1.800 1.200-1.800 1.200-1.200 1.800-1.200-1.800L9.500 10l1.800-1.200zM8.500 12.500l1 1.500-1 1.500-1-1.500z" /></Svg></button>
    <div className="mt-auto h-px w-[38px] bg-[#e0e2e8]" />
    <button aria-label="更多面板" className="mt-[21px] mb-[16px]">
      <Svg w={16} h={6}>
        <circle cx="2" cy="3" r="1.500" />
        <circle cx="8" cy="3" r="1.500" />
        <circle cx="14" cy="3" r="1.500" />
      </Svg>
    </button>
  </div>
);

const StatusBar = () => (
  <div className="flex h-7 shrink-0 items-center border-b border-black text-[#262c40]">
    <button aria-label="宏" className="ml-4 text-[#3d475c]"><Svg><path d="M5 10.500H.5v-10h10M12.500 6.500v-6h3v6M8.500 8v5q0 2-2.500 2M15 8.500h-3v3h3v3.500h-3.500" /></Svg></button>
    <div className="ml-[15px] h-[14px] w-px bg-[#e0e2e8]" />
    <div className="mr-4 ml-auto flex items-center">
      <button aria-label="护眼模式">
        <Svg>
          <path d="M.5 9.500Q8-.5 15.500 9.500 8 19.500.5 9.500zM8 0v2.500M2 1l1.500 2M14 1l-1.500 2" />
          <circle cx="8" cy="9.500" r="3.500" />
          <circle cx="8" cy="9.500" r="1.500" />
        </Svg>
      </button>
      <button aria-label="阅读模式" className="ml-[7px] flex items-center gap-1">
        <Svg><path d="M5.500 1.500h5v13h-5zM.5 5.500h15v5H.5z" /></Svg>
        <Caret />
      </button>
      <div className="mr-2.5 ml-[14px] h-[14px] w-px bg-[#dcdfe6]" />
      <button aria-label="普通视图" className="flex h-6 w-[23px] items-center justify-center rounded-sm bg-[#dce0e5]">
        <Svg><path d="M.5 2.500h15v12H.5zM.5 6.500h15M.5 10.500h15M5.500 2.500v12M10.500 2.500v12" /></Svg>
      </button>
      <button aria-label="分页预览" className="ml-[7px]"><Svg><path d="M.5.5h15v15H.5zM2.500 2.500h11v11h-11zM8 2.500v11" /></Svg></button>
      <button aria-label="页面布局视图" className="ml-2.5"><Svg><path d="M.5 1.500h15v13H.5zM5.500 1.500v8M.5 9.500h10v-8" /></Svg></button>
      <div className="mr-2.5 ml-[14px] h-[14px] w-px bg-[#dcdfe6]" />
      <button className="flex items-center gap-1 font-['Open_Sans',sans-serif] text-[13px]">
        147%
        <Caret />
      </button>
      <button aria-label="缩小" className="ml-3"><Svg w={10} h={12}><path d="M0 6h10" strokeWidth="2" /></Svg></button>
      <div className="relative ml-3 flex items-center">
        <span className="absolute left-[68px] h-[7px] w-px bg-[#3c4860]" />
        <input
          type="range"
          aria-label="显示比例"
          min={0}
          max={100}
          defaultValue={58}
          className="relative h-3 w-[138px] appearance-none bg-[linear-gradient(to_right,#3c4860_57%,#d0d3da_57%)] bg-[length:100%_1px] bg-center bg-no-repeat [&::-webkit-slider-thumb]:h-3 [&::-webkit-slider-thumb]:w-3 [&::-webkit-slider-thumb]:appearance-none [&::-webkit-slider-thumb]:rounded-full [&::-webkit-slider-thumb]:border [&::-webkit-slider-thumb]:border-[#4f5665] [&::-webkit-slider-thumb]:bg-[#ececee]"
        />
      </div>
      <button aria-label="放大" className="ml-3"><Svg w={10} h={12}><path d="M0 6h10M5 1v10" strokeWidth="2" /></Svg></button>
      <button aria-label="全屏" className="ml-3"><Svg w={15} h={15}><path d="M1 5V1h4M10 1h4v4M14 10v4h-4M5 14H1v-4M1 1l4.500 4.500M14 1L9.500 5.500M14 14l-4.500-4.500M1 14l4.500-4.500" /></Svg></button>
    </div>
  </div>
);

export default function App() {
  return (
    <div className="flex h-screen flex-col overflow-hidden bg-white font-['Noto_Sans','Noto_Sans_CJK_SC',sans-serif] text-[12px] leading-4 text-[#262c40]">
      <TitleBar />
      <MenuBar />
      <Ribbon />
      <div className="flex min-h-0 flex-1 flex-col bg-[#f5f6f9]">
        <div className="flex min-h-0 flex-1">
          <div className="flex min-w-0 flex-1 flex-col">
            <FormulaBar />
            <div className="flex min-h-0 flex-1">
              <Grid />
              <VScroll />
            </div>
            <SheetBar />
          </div>
          <SidePanel />
        </div>
        <StatusBar />
      </div>
    </div>
  );
}
